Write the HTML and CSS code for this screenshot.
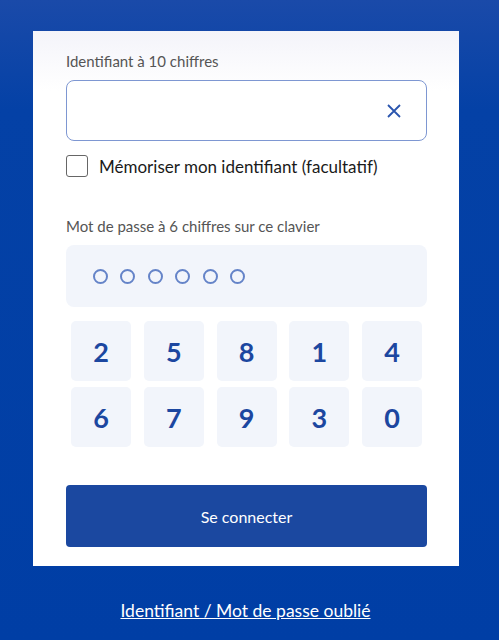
FILE: index.html
```html
<!DOCTYPE html>
<html lang="fr">
<head>
    <meta charset="UTF-8">
    <meta name="viewport" content="width=device-width, initial-scale=1.0">
    <title>Connexion</title>
    <link rel="stylesheet" href="styles.css">
</head>
<body>
    <div class="card">
        <label class="field-label" for="ident">Identifiant à 10 chiffres</label>
        <div class="ident-box">
            <input id="ident" type="text">
            <svg class="clear" width="16" height="16" viewBox="0 0 16 16">
                <path d="M2 2 L14 14 M14 2 L2 14" stroke="#2a55ae" stroke-width="1.8" fill="none"/>
            </svg>
        </div>
        <label class="remember">
            <span class="check"></span>
            Mémoriser mon identifiant (facultatif)
        </label>

        <div class="field-label pass-label">Mot de passe à 6 chiffres sur ce clavier</div>
        <div class="pass-box">
            <span class="dot"></span>
            <span class="dot"></span>
            <span class="dot"></span>
            <span class="dot"></span>
            <span class="dot"></span>
            <span class="dot"></span>
        </div>

        <div class="keypad">
            <button class="key">2</button>
            <button class="key">5</button>
            <button class="key">8</button>
            <button class="key">1</button>
            <button class="key">4</button>
            <button class="key">6</button>
            <button class="key">7</button>
            <button class="key">9</button>
            <button class="key">3</button>
            <button class="key">0</button>
        </div>

        <button class="submit">Se connecter</button>
    </div>

    <div class="forgot">
        <a href="#">Identifiant / Mot de passe oublié</a>
    </div>
</body>
</html>
```

FILE: styles.css
```css
body {
    margin: 0;
    height: 640px;
    overflow: hidden;
    font-family: Lato, "Open Sans", sans-serif;
    background: linear-gradient(to bottom, #1a4aa9 0px, #0441a6 110px, #003ea5 100%);
}
.card {
    margin: 31px 0 0 33px;
    width: 361px;
    padding: 22px 32px 19px 33px;
    background: linear-gradient(to bottom, #f4f4fa 0px, #ffffff 60px);
}
.field-label {
    display: block;
    font-size: 15px;
    line-height: 17px;
    color: #555;
}
.ident-box {
    position: relative;
    margin-top: 10px;
    height: 59px;
    border: 1px solid #7e97d2;
    border-radius: 8px;
    background: #fff;
}
.ident-box input {
    border: none;
    outline: none;
    background: transparent;
    width: 300px;
    height: 57px;
    padding: 0 16px;
    font: inherit;
}
.clear {
    position: absolute;
    right: 24px;
    top: 22px;
}
.remember {
    display: flex;
    align-items: center;
    gap: 11px;
    margin-top: 14px;
    font-size: 17px;
    color: #1a1a1a;
    height: 22px;
}
.check {
    width: 20px;
    height: 20px;
    border: 1px solid #666;
    border-radius: 3px;
    background: #fff;
}
.pass-label {
    margin-top: 41px;
}
.pass-box {
    margin-top: 10px;
    height: 62px;
    border-radius: 8px;
    background: #f2f5fb;
    display: flex;
    align-items: center;
    gap: 12.4px;
    padding-left: 27px;
}
.dot {
    width: 11px;
    height: 11px;
    border: 2px solid #6584c8;
    border-radius: 50%;
}
.keypad {
    margin: 14px 5px 0 5px;
    display: grid;
    grid-template-columns: repeat(5, 60px);
    justify-content: space-between;
    row-gap: 6px;
}
.key {
    width: 60px;
    height: 60px;
    border: none;
    border-radius: 5px;
    background: #f2f5fb;
    color: #1c47a0;
    font-family: Lato, sans-serif;
    font-size: 27px;
    font-weight: bold;
    padding: 0;
}
.submit {
    display: block;
    margin-top: 38px;
    width: 361px;
    height: 62px;
    border: none;
    border-radius: 4px;
    background: #1b48a0;
    color: #fff;
    font-family: Lato, sans-serif;
    font-size: 16px;
}
.forgot {
    text-align: center;
    margin-top: 34px;
    margin-left: -8px;
}
.forgot a {
    color: #fff;
    font-size: 17.5px;
}
```
